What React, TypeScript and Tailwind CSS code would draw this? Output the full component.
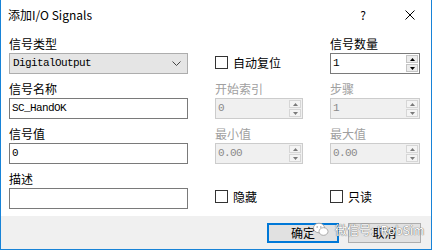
import React from 'react';

const cjk = { fontFamily: '"Noto Sans CJK SC", "Liberation Sans", sans-serif' };
const mono = { fontFamily: '"Liberation Mono", "Noto Sans CJK SC", monospace' };

// --- small pieces ---

const Label = ({ text, disabled }: { text: string; disabled?: boolean }) => (
  <div className={`h-[14px] text-[12px] leading-[14px] ${disabled ? 'text-[#a0a0a0]' : 'text-black'}`}>{text}</div>
);

const TextBox = ({ value }: { value: string }) => (
  <div className="mt-[2px] h-[21px] border border-[#7a7a7a] bg-white flex items-center pl-[2px]">
    <span className="text-[11px] tracking-[-0.6px] text-black" style={mono}>{value}</span>
  </div>
);

const SpinArrows = ({ disabled }: { disabled?: boolean }) => (
  <div className="flex flex-col w-[12px] h-[17px] mr-[1px] gap-[1px]">
    {[0, 1].map((i) => (
      <div key={i} className={`flex-1 flex items-center justify-center border ${disabled ? 'border-[#d6d6d6] bg-[#f4f4f4]' : 'border-[#c4c4c4] bg-[#ececec]'}`}>
        <svg width="5" height="3" viewBox="0 0 5 3">
          <path d={i === 0 ? 'M0 3 L2.5 0 L5 3 Z' : 'M0 0 L2.5 3 L5 0 Z'} fill={disabled ? '#7a7a7a' : '#000'} />
        </svg>
      </div>
    ))}
  </div>
);

const SpinBox = ({ value, disabled }: { value: string; disabled?: boolean }) => (
  <div className={`mt-[2px] h-[21px] border flex items-center justify-between pl-[2px] ${disabled ? 'border-[#cccccc] bg-[#f0f0f0]' : 'border-[#7a7a7a] bg-white'}`}>
    <span className={`text-[11px] tracking-[-0.6px] ${disabled ? 'text-[#8a8a8a]' : 'text-black'}`} style={mono}>{value}</span>
    <SpinArrows disabled={disabled} />
  </div>
);

const CheckBox = ({ text }: { text: string }) => (
  <div className="flex items-center gap-[5px] h-[13px]">
    <div className="w-[13px] h-[13px] border border-[#333333] bg-white" />
    <span className="text-[12px] leading-[14px] text-black">{text}</span>
  </div>
);

// --- dialog ---

export default function App() {
  return (
    <div className="w-[432px] h-[250px] bg-white flex flex-col border-x border-b border-[#1883d7] overflow-hidden relative" style={cjk}>
      {/* title bar */}
      <div className="h-[30px] flex items-center pl-[7px] shrink-0">
        <span className="text-[12px] text-black">添加I/O Signals</span>
        <span className="ml-auto text-[12px] text-black mr-[39px]">?</span>
        <svg width="10" height="10" viewBox="0 0 10 10" className="mr-[16px]">
          <path d="M0.5 0.5 L9.5 9.5 M9.5 0.5 L0.5 9.5" stroke="#000" strokeWidth="1" />
        </svg>
      </div>

      {/* body */}
      <div className="flex-1 pl-[8px] pt-[7px] flex gap-[27px]">
        {/* column 1 */}
        <div className="w-[179px] flex flex-col gap-[8px]">
          <div>
            <Label text="信号类型" />
            <div className="mt-[2px] h-[21px] border border-[#adadad] bg-[#e5e5e5] flex items-center justify-between pl-[3px] pr-[6px]">
              <span className="text-[11px] tracking-[-0.6px] text-black" style={mono}>DigitalOutput</span>
              <svg width="9" height="5" viewBox="0 0 9 5">
                <path d="M0.5 0.5 L4.5 4.5 L8.5 0.5" stroke="#444" strokeWidth="1" fill="none" />
              </svg>
            </div>
          </div>
          <div>
            <Label text="信号名称" />
            <TextBox value="SC_HandOK" />
          </div>
          <div>
            <Label text="信号值" />
            <TextBox value="0" />
          </div>
          <div>
            <Label text="描述" />
            <TextBox value="" />
          </div>
        </div>

        {/* column 2 */}
        <div className="w-[88px] flex flex-col gap-[8px]">
          <div className="h-[37px] flex items-end pb-[5px]">
            <CheckBox text="自动复位" />
          </div>
          <div>
            <Label text="开始索引" disabled />
            <SpinBox value="0" disabled />
          </div>
          <div>
            <Label text="最小值" disabled />
            <SpinBox value="0.00" disabled />
          </div>
          <div className="h-[37px] flex items-end pb-[6px]">
            <CheckBox text="隐藏" />
          </div>
        </div>

        {/* column 3 */}
        <div className="w-[90px] flex flex-col gap-[8px]">
          <div>
            <Label text="信号数量" />
            <SpinBox value="1" />
          </div>
          <div>
            <Label text="步骤" disabled />
            <SpinBox value="1" disabled />
          </div>
          <div>
            <Label text="最大值" disabled />
            <SpinBox value="0.00" disabled />
          </div>
          <div className="h-[37px] flex items-end pb-[6px]">
            <CheckBox text="只读" />
          </div>
        </div>
      </div>

      {/* footer */}
      <div className="h-[33px] bg-[#f0f0f0] flex items-center justify-end gap-[9px] pr-[10px] shrink-0">
        <button className="w-[72px] h-[20px] border-2 border-[#0078d7] bg-[#e1e1e1] text-[12px] leading-[14px] text-black">确定</button>
        <button className="w-[73px] h-[20px] border border-[#adadad] bg-[#e1e1e1] text-[12px] leading-[14px] text-black">取消</button>
      </div>

      {/* watermark */}
      <div className="absolute left-[312px] top-[222px] flex items-center gap-[6px] pointer-events-none">
        <svg width="16" height="15" viewBox="0 0 16 15">
          <ellipse cx="6" cy="6" rx="5.5" ry="4.8" fill="#fff" stroke="#9a9a9a" strokeWidth="0.8" />
          <ellipse cx="10.5" cy="9.5" rx="4.5" ry="3.8" fill="#fff" stroke="#9a9a9a" strokeWidth="0.8" />
          <circle cx="4.2" cy="5" r="0.8" fill="#9a9a9a" />
          <circle cx="7.8" cy="5" r="0.8" fill="#9a9a9a" />
        </svg>
        <span className="text-[12px] leading-[14px] text-white [text-shadow:0_0_1px_#666,0_0_1px_#666]">微信号: IRobSim</span>
      </div>
    </div>
  );
}
